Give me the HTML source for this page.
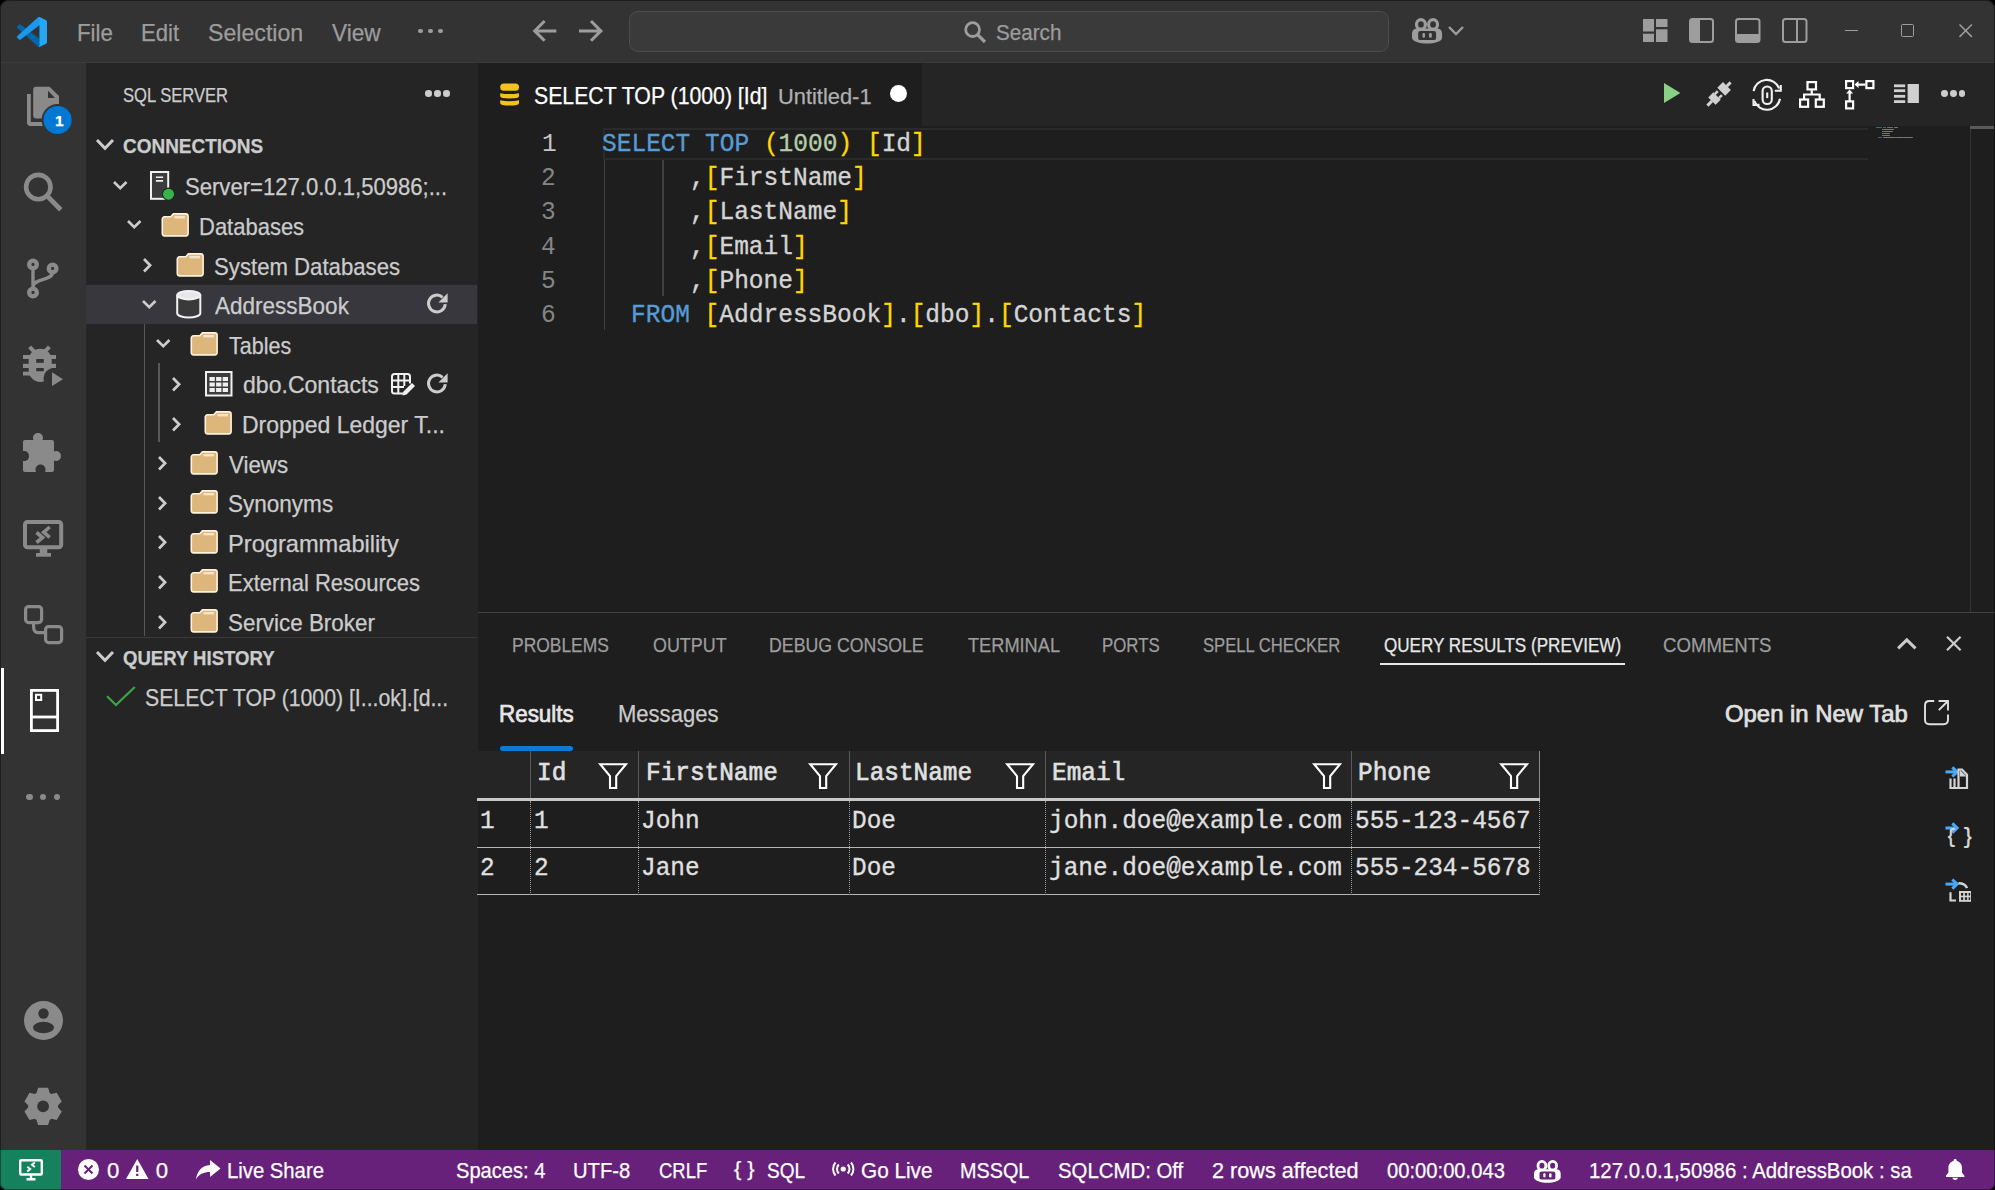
<!DOCTYPE html>
<html><head><meta charset="utf-8">
<style>
*{box-sizing:border-box;margin:0;padding:0}
html,body{width:1995px;height:1190px;overflow:hidden;background:#000}
body{font-family:"Liberation Sans",sans-serif;color:#ccc}
.a:not(.mono){-webkit-text-stroke:0.25px currentColor}
.a{position:absolute;white-space:nowrap}
.mono{font-family:"Liberation Mono",monospace}
#win{position:absolute;left:0;top:0;width:1995px;height:1190px;border-radius:9px 9px 7px 7px;overflow:hidden;background:#1e1e1e}
#frame{position:absolute;left:0;top:0;width:1995px;height:1190px;border-radius:9px 9px 7px 7px;box-shadow:inset 0 0 0 1px rgba(0,0,0,.4);pointer-events:none}
svg{position:absolute;overflow:visible}
</style></head><body>
<div id="win">
<div class="a" style="left:0px;top:0px;width:1995px;height:63px;background:#333333;"></div>
<div class="a" style="left:0px;top:63px;width:86px;height:1087px;background:#333333;"></div>
<div class="a" style="left:86px;top:63px;width:392px;height:1087px;background:#252526;"></div>
<div class="a" style="left:478px;top:63px;width:1517px;height:63px;background:#252526;"></div>
<div class="a" style="left:478px;top:126px;width:1517px;height:486px;background:#1e1e1e;"></div>
<div class="a" style="left:478px;top:612px;width:1517px;height:538px;background:#1e1e1e;"></div>
<div class="a" style="left:478px;top:612px;width:1517px;height:1.2px;background:#424242;"></div>
<div class="a" style="left:0px;top:1150px;width:1995px;height:40px;background:#68217a;"></div>
<div class="a" style="left:0px;top:61.8px;width:1995px;height:1.2px;background:#3b3b3b;"></div>
<div class="a" style="left:0px;top:1150px;width:61px;height:40px;background:#16825d;"></div>
<svg style="left:17px;top:17px;" width="30" height="30" viewBox="0 0 100 100"><path fill="#0065a9" d="M96.5 10.8 75.9 0.9a6.2 6.2 0 0 0-7.1 1.2L29.4 38 12.2 25a4.2 4.2 0 0 0-5.3.2L1.4 30.3a4.2 4.2 0 0 0 0 6.2L16.3 50 1.4 63.5a4.2 4.2 0 0 0 0 6.2l5.5 5a4.2 4.2 0 0 0 5.3.2L29.4 62l39.4 35.9a6.2 6.2 0 0 0 7.1 1.2l20.6-9.9a6.2 6.2 0 0 0 3.5-5.6V16.4a6.2 6.2 0 0 0-3.5-5.6zM75 72.7 45.1 50 75 27.3z"/><path fill="#1f9cf0" d="M96.5 10.8 75.9 0.9a6.2 6.2 0 0 0-7.1 1.2L1.4 63.5a4.2 4.2 0 0 0 0 6.2l5.5 5a4.2 4.2 0 0 0 5.3.2L93 13.6a4.2 4.2 0 0 1 7 3.1v-.3a6.2 6.2 0 0 0-3.5-5.6z" opacity=".9"/><path fill="#24a8f5" d="M75.9 99.1a6.2 6.2 0 0 1-7.1-1.2 3.6 3.6 0 0 0 6.2-2.6V4.7a3.6 3.6 0 0 0-6.2-2.6 6.2 6.2 0 0 1 7.1-1.2l20.6 9.9a6.2 6.2 0 0 1 3.5 5.6v67.2a6.2 6.2 0 0 1-3.5 5.6z"/></svg>
<div class="a" style="left:77.24px;top:22px;font-size:23.2px;line-height:23.2px;color:#9d9d9d;transform:scaleX(0.9615);transform-origin:0 0;">File</div>
<div class="a" style="left:141.45px;top:22px;font-size:23.2px;line-height:23.2px;color:#9d9d9d;transform:scaleX(0.9541);transform-origin:0 0;">Edit</div>
<div class="a" style="left:208.20px;top:22px;font-size:23.2px;line-height:23.2px;color:#9d9d9d;transform:scaleX(0.9979);transform-origin:0 0;">Selection</div>
<div class="a" style="left:332.00px;top:22px;font-size:23.2px;line-height:23.2px;color:#9d9d9d;transform:scaleX(0.9742);transform-origin:0 0;">View</div>
<div class="a" style="left:418.2px;top:28.5px;width:4.6px;height:4.6px;border-radius:50%;background:#9d9d9d"></div>
<div class="a" style="left:428.09999999999997px;top:28.5px;width:4.6px;height:4.6px;border-radius:50%;background:#9d9d9d"></div>
<div class="a" style="left:438.0px;top:28.5px;width:4.6px;height:4.6px;border-radius:50%;background:#9d9d9d"></div>
<svg style="left:532.6px;top:19.9px;" width="23.4" height="21.8" viewBox="0 0 23.4 21.8"><path d="M23.4 10.9H2.5M11.6 1 1.7 10.9l9.9 9.9" fill="none" stroke="#9d9d9d" stroke-width="3"/></svg>
<svg style="left:579px;top:19.9px;" width="24" height="21.8" viewBox="0 0 24 21.8"><path d="M0 10.9h21.3M12 1l9.9 9.9L12 20.8" fill="none" stroke="#9d9d9d" stroke-width="3"/></svg>
<div class="a" style="left:629px;top:11px;width:760px;height:40.5px;border-radius:9px;background:#3a3a3a;border:1.5px solid #4d4d4d"></div>
<svg style="left:964px;top:21px;" width="22" height="22" viewBox="0 0 22 22"><circle cx="8.6" cy="8.6" r="6.9" fill="none" stroke="#9d9d9d" stroke-width="2.8"/><path d="M13.6 13.6 21 21" stroke="#9d9d9d" stroke-width="3.2"/></svg>
<div class="a" style="left:996.06px;top:22px;font-size:22px;line-height:22px;color:#9d9d9d;transform:scaleX(0.9382);transform-origin:0 0;">Search</div>
<svg style="left:1411.8px;top:17.6px;" width="30.1" height="25.6" viewBox="0 0 30.1 25.6"><path fill="#9d9d9d" d="M0 16.4C0 11.4 2.2 10.4 6.2 10.4H23.9C27.9 10.4 30.1 11.4 30.1 16.4V19.4C30.1 23.4 22.2 25.6 15.05 25.6S0 23.4 0 19.4z"/><rect x="6.2" y="13" width="17.9" height="9.1" rx="2.2" fill="#333333"/><rect x="10.5" y="14.9" width="2.5" height="4.9" rx="1.25" fill="#9d9d9d"/><rect x="17" y="14.9" width="2.8" height="4.9" rx="1.3" fill="#9d9d9d"/><ellipse cx="8.95" cy="6.4" rx="4.45" ry="4.8" fill="#333333" stroke="#9d9d9d" stroke-width="3.2"/><ellipse cx="21.05" cy="6.4" rx="4.45" ry="4.8" fill="#333333" stroke="#9d9d9d" stroke-width="3.2"/></svg>
<svg style="left:1448px;top:26px;" width="16" height="9" viewBox="0 0 16 9"><path d="M1 1l7 7 7-7" fill="none" stroke="#9d9d9d" stroke-width="2.4"/></svg>
<svg style="left:1642.6px;top:19px;" width="24.5" height="23" viewBox="0 0 24.5 23"><g fill="#9d9d9d"><rect x="0" y="0" width="11" height="12.5"/><rect x="0" y="14.7" width="11" height="8.3"/><rect x="13" y="0" width="11.5" height="8"/><rect x="13" y="10.3" width="11.5" height="12.7"/></g></svg>
<svg style="left:1689px;top:18px;" width="25" height="25" viewBox="0 0 25 25"><rect x="1" y="1" width="23" height="23" rx="2.5" fill="none" stroke="#9d9d9d" stroke-width="2"/><path d="M1 3.5C1 2 2 1 3.5 1H11v23H3.5C2 24 1 23 1 21.5z" fill="#9d9d9d"/></svg>
<svg style="left:1735.3px;top:18px;" width="25.5" height="25" viewBox="0 0 25.5 25"><rect x="1" y="1" width="23.5" height="23" rx="2.5" fill="none" stroke="#9d9d9d" stroke-width="2"/><path d="M1 15.9h23.5v5.6c0 1.5-1 2.5-2.5 2.5H3.5C2 24 1 23 1 21.5z" fill="#9d9d9d"/></svg>
<svg style="left:1782.2px;top:18px;" width="25.5" height="25" viewBox="0 0 25.5 25"><rect x="1" y="1" width="23.5" height="23" rx="2.5" fill="none" stroke="#9d9d9d" stroke-width="2"/><path d="M15 1v23" stroke="#9d9d9d" stroke-width="2"/></svg>
<div class="a" style="left:1845px;top:29.6px;width:13px;height:1.4px;background:#9d9d9d;"></div>
<div class="a" style="left:1901px;top:24px;width:13px;height:13px;border:1.4px solid #9d9d9d;border-radius:1.5px"></div>
<svg style="left:1958.6px;top:24px;" width="13.4" height="13.4" viewBox="0 0 13.4 13.4"><path d="M.5.5l12.4 12.4M12.9.5.5 12.9" stroke="#9d9d9d" stroke-width="1.5"/></svg>
<svg style="left:20px;top:80px;" width="56" height="56" viewBox="0 0 56 56"><path fill="#8a8a8a" d="M16.2 6.8H29.6L39 16V35.6Q39 38.6 36 38.6H16.2Q13.2 38.6 13.2 35.6V9.8Q13.2 6.8 16.2 6.8z"/><path fill="#333" d="M28 10.8V18.1H35z"/><path fill="none" stroke="#8a8a8a" stroke-width="3.8" d="M8.9 13.9V42.5Q8.9 44 10.4 44H26"/><circle cx="37.6" cy="40" r="16" fill="#333"/><circle cx="37.6" cy="40" r="14.1" fill="#0078d4"/></svg>
<div class="a" style="left:55.00px;top:113px;font-size:15.5px;line-height:15.5px;color:#ffffff;font-weight:700;">1</div>
<svg style="left:0px;top:0px;" width="1" height="1" viewBox="0 0 1 1"><circle cx="38.3" cy="187.1" r="12.2" fill="none" stroke="#8a8a8a" stroke-width="4.6"/><path d="M47.3 196.1 60.8 209.8" stroke="#8a8a8a" stroke-width="4.8"/></svg>
<svg style="left:0px;top:0px;" width="1" height="1" viewBox="0 0 1 1"><g fill="none" stroke="#8a8a8a"><path d="M33 268.2V288.6M52.6 272.2c0 8.5-19.6 6.5-19.6 14.5" stroke-width="3.4"/><circle cx="33" cy="264.4" r="3.8" stroke-width="4.4"/><circle cx="33" cy="292.4" r="3.8" stroke-width="4.4"/><circle cx="52.6" cy="268.4" r="3.8" stroke-width="4.4"/></g></svg>
<svg style="left:21px;top:344px;" width="44" height="44" viewBox="0 0 44 44"><g fill="#8a8a8a"><rect x="2" y="11" width="33" height="4"/><rect x="2" y="19.8" width="33" height="4.2"/><rect x="2" y="27.7" width="33" height="3.8"/><rect x="7.7" y="4.7" width="23" height="33.2" rx="11.5"/></g><path d="M8.6 2.8 13.5 7.8M28.4 2.8 23.5 7.8" stroke="#8a8a8a" stroke-width="4"/><g fill="#333"><rect x="15.2" y="15" width="7.6" height="3.8"/><rect x="15.2" y="24" width="7.6" height="3.2"/><circle cx="33" cy="34.5" r="10.5"/></g><path d="M31 28.2 42 35.2 31 42.1z" fill="#8a8a8a"/></svg>
<svg style="left:22.5px;top:432.5px;" width="40" height="39" viewBox="0 0 40 39"><path fill="#8a8a8a" d="M15 0c3 0 5 2.2 5 5 0 .8-.2 1.5-.5 2H29c1.1 0 2 .9 2 2v9.5c.5-.3 1.2-.5 2-.5 3 0 5 2.2 5 5s-2 5-5 5c-.8 0-1.5-.2-2-.5V37c0 1.1-.9 2-2 2h-7c.3-.7.5-1.5.5-2.3 0-3-2.2-5.2-5-5.2s-5 2.2-5 5.2c0 .8.2 1.6.5 2.3H2c-1.1 0-2-.9-2-2V28h1c3 0 5-2 5-5s-2-5-5-5H0V9c0-1.1.9-2 2-2h8.5c-.3-.5-.5-1.2-.5-2 0-2.8 2-5 5-5z"/></svg>
<svg style="left:21px;top:518px;" width="44" height="40" viewBox="0 0 44 40"><rect x="4" y="3.9" width="36.2" height="25.3" rx="2.5" fill="none" stroke="#8a8a8a" stroke-width="4"/><rect x="18.8" y="30" width="7.5" height="5" fill="#8a8a8a"/><rect x="15" y="35" width="15" height="3.7" fill="#8a8a8a"/><path d="M15.5 14.5 21.5 19.5 15.5 24.5M28.7 9 22.7 14.2 28.7 19.4" fill="none" stroke="#8a8a8a" stroke-width="3.6"/></svg>
<svg style="left:24px;top:604.5px;" width="40" height="40" viewBox="0 0 40 40"><g fill="none" stroke="#8a8a8a" stroke-width="3.2"><rect x="1.6" y="1.6" width="16" height="16" rx="3"/><rect x="21.6" y="21.6" width="16" height="16" rx="3"/><path d="M9.6 17.6v4.5c0 3 1.5 5.5 4.5 5.5h7.5"/></g></svg>
<div class="a" style="left:1px;top:668px;width:2.6px;height:86px;background:#ffffff;"></div>
<svg style="left:29.5px;top:688.8px;" width="29" height="43" viewBox="0 0 29 43"><g fill="none" stroke="#ffffff" stroke-width="2.8"><rect x="1.4" y="1.4" width="26.2" height="40.2"/><path d="M1.4 28h26.2"/><rect x="6" y="5.8" width="5.2" height="5.2" stroke-width="2"/></g></svg>
<div class="a" style="left:26.4px;top:794.3px;width:6.2px;height:6.2px;border-radius:50%;background:#8a8a8a"></div>
<div class="a" style="left:39.9px;top:794.3px;width:6.2px;height:6.2px;border-radius:50%;background:#8a8a8a"></div>
<div class="a" style="left:53.5px;top:794.3px;width:6.2px;height:6.2px;border-radius:50%;background:#8a8a8a"></div>
<svg style="left:23.8px;top:1000.8px;" width="39" height="39" viewBox="0 0 39 39"><circle cx="19.5" cy="19.5" r="19.5" fill="#8a8a8a"/><circle cx="19.5" cy="12.5" r="5.2" fill="#333"/><ellipse cx="19.5" cy="26.5" rx="10.5" ry="5.8" fill="#333"/></svg>
<svg style="left:23.8px;top:1086.8px;" width="39" height="39" viewBox="0 0 39 39"><polygon points="10.71,6.96 12.52,5.92 14.10,0.76 24.10,0.76 25.68,5.92 25.68,5.92 27.49,6.96 32.75,5.75 37.74,14.40 34.06,18.35 34.06,18.35 34.06,20.45 37.74,24.40 32.75,33.05 27.49,31.84 27.49,31.84 25.68,32.88 24.10,38.04 14.10,38.04 12.52,32.88 12.52,32.88 10.71,31.84 5.45,33.05 0.46,24.40 4.14,20.45 4.14,20.45 4.14,18.35 0.46,14.40 5.45,5.75 10.71,6.96" fill="#8a8a8a"/><circle cx="19.1" cy="19.4" r="5.9" fill="#333"/></svg>
<div class="a" style="left:123.10px;top:86px;font-size:19.6px;line-height:19.6px;color:#cccccc;transform:scaleX(0.8459);transform-origin:0 0;">SQL SERVER</div>
<div class="a" style="left:425.2px;top:90.3px;width:6.6px;height:6.6px;border-radius:50%;background:#cccccc"></div>
<div class="a" style="left:434.2px;top:90.3px;width:6.6px;height:6.6px;border-radius:50%;background:#cccccc"></div>
<div class="a" style="left:443.2px;top:90.3px;width:6.6px;height:6.6px;border-radius:50%;background:#cccccc"></div>
<svg style="left:95.5px;top:139.45px;" width="18" height="10.5" viewBox="0 0 18 10.5"><path d="M1 1 9.0 9.3 17 1" fill="none" stroke="#cccccc" stroke-width="3"/></svg>
<div class="a" style="left:123.10px;top:137px;font-size:19.6px;line-height:19.6px;color:#cccccc;font-weight:700;transform:scaleX(0.9681);transform-origin:0 0;">CONNECTIONS</div>
<div class="a" style="left:86px;top:284.8px;width:391px;height:39.2px;background:#37373d;"></div>
<div class="a" style="left:144.2px;top:323.50000000000006px;width:1.2px;height:312.49999999999994px;background:#585858;"></div>
<div class="a" style="left:158.4px;top:363.1px;width:1.2px;height:79.19999999999999px;background:#585858;"></div>
<svg style="left:113.05px;top:180.75px;" width="14.5" height="8.3" viewBox="0 0 14.5 8.3"><path d="M1 1 7.25 7.1000000000000005 13.5 1" fill="none" stroke="#cccccc" stroke-width="2.7"/></svg>
<div class="a" style="left:184.75px;top:176px;font-size:23.2px;line-height:23.2px;color:#cccccc;transform:scaleX(0.9524);transform-origin:0 0;">Server=127.0.0.1,50986;...</div>
<svg style="left:150.1px;top:171.1px;" width="25" height="29.5" viewBox="0 0 25 29.5"><rect x="1" y="1" width="17.2" height="26.8" fill="#3c3c3c" stroke="#f2f2f2" stroke-width="2"/><path d="M5.9 6.2h7.2M5.9 9.9h7.2" stroke="#f2f2f2" stroke-width="1.6"/><circle cx="18.5" cy="23.2" r="6.6" fill="#252526"/><circle cx="18.5" cy="23.2" r="5.5" fill="#37b34a"/></svg>
<svg style="left:127.44999999999999px;top:220.35px;" width="14.5" height="8.3" viewBox="0 0 14.5 8.3"><path d="M1 1 7.25 7.1000000000000005 13.5 1" fill="none" stroke="#cccccc" stroke-width="2.7"/></svg>
<div class="a" style="left:199.15px;top:216px;font-size:23.2px;line-height:23.2px;color:#cccccc;transform:scaleX(0.9482);transform-origin:0 0;">Databases</div>
<svg style="left:162.2px;top:212.9px;" width="27" height="23.5" viewBox="0 0 27 23.5"><path d="M2.6 3.8h6.2l2.6-2.9h12.4c1.3 0 2.3 1 2.3 2.3v17.4c0 1.3-1 2.3-2.3 2.3H2.6c-1.3 0-2.3-1-2.3-2.3V6.1c0-1.3 1-2.3 2.3-2.3z" fill="#dcb67a" stroke="#fff3dd" stroke-width="1.6"/><path d="M12.4 3h10.6v2.4H12.4z" fill="#f6e3c9"/></svg>
<svg style="left:143.15px;top:258.25px;" width="8.3" height="14.5" viewBox="0 0 8.3 14.5"><path d="M1 1 7.1000000000000005 7.25 1 13.5" fill="none" stroke="#cccccc" stroke-width="2.7"/></svg>
<div class="a" style="left:213.54px;top:256px;font-size:23.2px;line-height:23.2px;color:#cccccc;transform:scaleX(0.9564);transform-origin:0 0;">System Databases</div>
<svg style="left:176.6px;top:252.5px;" width="27" height="23.5" viewBox="0 0 27 23.5"><path d="M2.6 3.8h6.2l2.6-2.9h12.4c1.3 0 2.3 1 2.3 2.3v17.4c0 1.3-1 2.3-2.3 2.3H2.6c-1.3 0-2.3-1-2.3-2.3V6.1c0-1.3 1-2.3 2.3-2.3z" fill="#dcb67a" stroke="#fff3dd" stroke-width="1.6"/><path d="M12.4 3h10.6v2.4H12.4z" fill="#f6e3c9"/></svg>
<svg style="left:141.85px;top:299.55000000000007px;" width="14.5" height="8.3" viewBox="0 0 14.5 8.3"><path d="M1 1 7.25 7.1000000000000005 13.5 1" fill="none" stroke="#cccccc" stroke-width="2.7"/></svg>
<div class="a" style="left:214.50px;top:295px;font-size:23.2px;line-height:23.2px;color:#cccccc;transform:scaleX(0.9709);transform-origin:0 0;">AddressBook</div>
<svg style="left:175.9px;top:290.4px;" width="25.5" height="28.5" viewBox="0 0 25.5 28.5"><path d="M1.2 5.2v18c0 2.4 5.2 4.3 11.55 4.3s11.55-1.9 11.55-4.3v-18" fill="#3a3a3a" stroke="#f2f2f2" stroke-width="2"/><ellipse cx="12.75" cy="5.2" rx="11.55" ry="4.2" fill="#e8e8e8" stroke="#f2f2f2" stroke-width="2"/></svg>
<svg style="left:156.25px;top:339.1500000000001px;" width="14.5" height="8.3" viewBox="0 0 14.5 8.3"><path d="M1 1 7.25 7.1000000000000005 13.5 1" fill="none" stroke="#cccccc" stroke-width="2.7"/></svg>
<div class="a" style="left:228.90px;top:335px;font-size:23.2px;line-height:23.2px;color:#cccccc;transform:scaleX(0.9273);transform-origin:0 0;">Tables</div>
<svg style="left:191.0px;top:331.70000000000005px;" width="27" height="23.5" viewBox="0 0 27 23.5"><path d="M2.6 3.8h6.2l2.6-2.9h12.4c1.3 0 2.3 1 2.3 2.3v17.4c0 1.3-1 2.3-2.3 2.3H2.6c-1.3 0-2.3-1-2.3-2.3V6.1c0-1.3 1-2.3 2.3-2.3z" fill="#dcb67a" stroke="#fff3dd" stroke-width="1.6"/><path d="M12.4 3h10.6v2.4H12.4z" fill="#f6e3c9"/></svg>
<svg style="left:171.95000000000002px;top:377.05px;" width="8.3" height="14.5" viewBox="0 0 8.3 14.5"><path d="M1 1 7.1000000000000005 7.25 1 13.5" fill="none" stroke="#cccccc" stroke-width="2.7"/></svg>
<div class="a" style="left:243.30px;top:374px;font-size:23.2px;line-height:23.2px;color:#cccccc;transform:scaleX(0.9946);transform-origin:0 0;">dbo.Contacts</div>
<svg style="left:204.9px;top:370.8px;" width="27.5" height="25.5" viewBox="0 0 27.5 25.5"><rect x="1" y="1" width="25.5" height="23.5" fill="#3c3c3c" stroke="#f0f0f0" stroke-width="2"/><g fill="#f0f0f0"><rect x="4.5" y="6" width="5.3" height="4"/><rect x="11.1" y="6" width="5.3" height="4"/><rect x="17.7" y="6" width="5.3" height="4"/><rect x="4.5" y="11.5" width="5.3" height="4"/><rect x="11.1" y="11.5" width="5.3" height="4"/><rect x="17.7" y="11.5" width="5.3" height="4"/><rect x="4.5" y="17" width="5.3" height="4"/><rect x="11.1" y="17" width="5.3" height="4"/><rect x="17.7" y="17" width="5.3" height="4"/></g></svg>
<svg style="left:171.95000000000002px;top:416.65000000000003px;" width="8.3" height="14.5" viewBox="0 0 8.3 14.5"><path d="M1 1 7.1000000000000005 7.25 1 13.5" fill="none" stroke="#cccccc" stroke-width="2.7"/></svg>
<div class="a" style="left:242.31px;top:414px;font-size:23.2px;line-height:23.2px;color:#cccccc;transform:scaleX(0.9921);transform-origin:0 0;">Dropped Ledger T...</div>
<svg style="left:205.39999999999998px;top:410.90000000000003px;" width="27" height="23.5" viewBox="0 0 27 23.5"><path d="M2.6 3.8h6.2l2.6-2.9h12.4c1.3 0 2.3 1 2.3 2.3v17.4c0 1.3-1 2.3-2.3 2.3H2.6c-1.3 0-2.3-1-2.3-2.3V6.1c0-1.3 1-2.3 2.3-2.3z" fill="#dcb67a" stroke="#fff3dd" stroke-width="1.6"/><path d="M12.4 3h10.6v2.4H12.4z" fill="#f6e3c9"/></svg>
<svg style="left:157.55px;top:456.25px;" width="8.3" height="14.5" viewBox="0 0 8.3 14.5"><path d="M1 1 7.1000000000000005 7.25 1 13.5" fill="none" stroke="#cccccc" stroke-width="2.7"/></svg>
<div class="a" style="left:228.90px;top:454px;font-size:23.2px;line-height:23.2px;color:#cccccc;transform:scaleX(0.9615);transform-origin:0 0;">Views</div>
<svg style="left:191.0px;top:450.5px;" width="27" height="23.5" viewBox="0 0 27 23.5"><path d="M2.6 3.8h6.2l2.6-2.9h12.4c1.3 0 2.3 1 2.3 2.3v17.4c0 1.3-1 2.3-2.3 2.3H2.6c-1.3 0-2.3-1-2.3-2.3V6.1c0-1.3 1-2.3 2.3-2.3z" fill="#dcb67a" stroke="#fff3dd" stroke-width="1.6"/><path d="M12.4 3h10.6v2.4H12.4z" fill="#f6e3c9"/></svg>
<svg style="left:157.55px;top:495.85px;" width="8.3" height="14.5" viewBox="0 0 8.3 14.5"><path d="M1 1 7.1000000000000005 7.25 1 13.5" fill="none" stroke="#cccccc" stroke-width="2.7"/></svg>
<div class="a" style="left:227.93px;top:493px;font-size:23.2px;line-height:23.2px;color:#cccccc;transform:scaleX(0.9713);transform-origin:0 0;">Synonyms</div>
<svg style="left:191.0px;top:490.1px;" width="27" height="23.5" viewBox="0 0 27 23.5"><path d="M2.6 3.8h6.2l2.6-2.9h12.4c1.3 0 2.3 1 2.3 2.3v17.4c0 1.3-1 2.3-2.3 2.3H2.6c-1.3 0-2.3-1-2.3-2.3V6.1c0-1.3 1-2.3 2.3-2.3z" fill="#dcb67a" stroke="#fff3dd" stroke-width="1.6"/><path d="M12.4 3h10.6v2.4H12.4z" fill="#f6e3c9"/></svg>
<svg style="left:157.55px;top:535.45px;" width="8.3" height="14.5" viewBox="0 0 8.3 14.5"><path d="M1 1 7.1000000000000005 7.25 1 13.5" fill="none" stroke="#cccccc" stroke-width="2.7"/></svg>
<div class="a" style="left:227.88px;top:533px;font-size:23.2px;line-height:23.2px;color:#cccccc;transform:scaleX(1.0191);transform-origin:0 0;">Programmability</div>
<svg style="left:191.0px;top:529.7px;" width="27" height="23.5" viewBox="0 0 27 23.5"><path d="M2.6 3.8h6.2l2.6-2.9h12.4c1.3 0 2.3 1 2.3 2.3v17.4c0 1.3-1 2.3-2.3 2.3H2.6c-1.3 0-2.3-1-2.3-2.3V6.1c0-1.3 1-2.3 2.3-2.3z" fill="#dcb67a" stroke="#fff3dd" stroke-width="1.6"/><path d="M12.4 3h10.6v2.4H12.4z" fill="#f6e3c9"/></svg>
<svg style="left:157.55px;top:575.05px;" width="8.3" height="14.5" viewBox="0 0 8.3 14.5"><path d="M1 1 7.1000000000000005 7.25 1 13.5" fill="none" stroke="#cccccc" stroke-width="2.7"/></svg>
<div class="a" style="left:227.95px;top:572px;font-size:23.2px;line-height:23.2px;color:#cccccc;transform:scaleX(0.9495);transform-origin:0 0;">External Resources</div>
<svg style="left:191.0px;top:569.3px;" width="27" height="23.5" viewBox="0 0 27 23.5"><path d="M2.6 3.8h6.2l2.6-2.9h12.4c1.3 0 2.3 1 2.3 2.3v17.4c0 1.3-1 2.3-2.3 2.3H2.6c-1.3 0-2.3-1-2.3-2.3V6.1c0-1.3 1-2.3 2.3-2.3z" fill="#dcb67a" stroke="#fff3dd" stroke-width="1.6"/><path d="M12.4 3h10.6v2.4H12.4z" fill="#f6e3c9"/></svg>
<svg style="left:157.55px;top:614.6500000000001px;" width="8.3" height="14.5" viewBox="0 0 8.3 14.5"><path d="M1 1 7.1000000000000005 7.25 1 13.5" fill="none" stroke="#cccccc" stroke-width="2.7"/></svg>
<div class="a" style="left:227.93px;top:612px;font-size:23.2px;line-height:23.2px;color:#cccccc;transform:scaleX(0.9661);transform-origin:0 0;">Service Broker</div>
<svg style="left:191.0px;top:608.9000000000001px;" width="27" height="23.5" viewBox="0 0 27 23.5"><path d="M2.6 3.8h6.2l2.6-2.9h12.4c1.3 0 2.3 1 2.3 2.3v17.4c0 1.3-1 2.3-2.3 2.3H2.6c-1.3 0-2.3-1-2.3-2.3V6.1c0-1.3 1-2.3 2.3-2.3z" fill="#dcb67a" stroke="#fff3dd" stroke-width="1.6"/><path d="M12.4 3h10.6v2.4H12.4z" fill="#f6e3c9"/></svg>
<svg style="left:425.7px;top:292.2px;" width="23" height="22.5" viewBox="0 0 23 22.5"><path d="M19.3 12.2A8.4 8.4 0 1 1 16.6 5.3" fill="none" stroke="#cccccc" stroke-width="3"/><path d="M21.6 1.2v9.2h-9.2z" fill="#cccccc"/></svg>
<svg style="left:425.7px;top:372.4px;" width="23" height="22.5" viewBox="0 0 23 22.5"><path d="M19.3 12.2A8.4 8.4 0 1 1 16.6 5.3" fill="none" stroke="#cccccc" stroke-width="3"/><path d="M21.6 1.2v9.2h-9.2z" fill="#cccccc"/></svg>
<svg style="left:390.8px;top:372.5px;" width="24.5" height="24" viewBox="0 0 24.5 24"><g fill="none" stroke="#f0f0f0" stroke-width="2"><path d="M14 20.5H3.5c-1.4 0-2.5-1.1-2.5-2.5V3.5C1 2.1 2.1 1 3.5 1h13c1.4 0 2.5 1.1 2.5 2.5v7"/><path d="M1 7.5h18M1 14h12M7.3 1v19.5M13.3 1v12"/></g><path d="M11.5 22.5l1-4 8.5-8.5 3 3-8.5 8.5z" fill="#f0f0f0"/></svg>
<div class="a" style="left:86px;top:636.6px;width:391px;height:1.3px;background:#3a3a3a;"></div>
<svg style="left:95.7px;top:651.25px;" width="18" height="10.5" viewBox="0 0 18 10.5"><path d="M1 1 9.0 9.3 17 1" fill="none" stroke="#cccccc" stroke-width="3"/></svg>
<div class="a" style="left:123.00px;top:649px;font-size:19.6px;line-height:19.6px;color:#cccccc;font-weight:700;transform:scaleX(0.9468);transform-origin:0 0;">QUERY HISTORY</div>
<svg style="left:106px;top:686px;" width="30" height="21" viewBox="0 0 30 21"><path d="M1 10.2 10 19 28.8 1" fill="none" stroke="#3da344" stroke-width="2.3"/></svg>
<div class="a" style="left:144.78px;top:687px;font-size:23.2px;line-height:23.2px;color:#cccccc;transform:scaleX(0.9165);transform-origin:0 0;">SELECT TOP (1000) [I...ok].[d...</div>
<div class="a" style="left:478px;top:63px;width:444px;height:63px;background:#1e1e1e;"></div>
<svg style="left:0px;top:0px;" width="1" height="1" viewBox="0 0 1 1"><g fill="#f4c21c"><rect x="500.2" y="83.4" width="18.8" height="7.4" rx="3.6"/><path d="M500.2 93.2Q509.6 95 519 93.2V96.2Q519 98.4 509.6 98.4T500.2 96.2z"/><path d="M500.2 100.3Q509.6 102.1 519 100.3V103.2Q519 105.5 509.6 105.5T500.2 103.2z"/></g></svg>
<div class="a" style="left:533.78px;top:85px;font-size:23.2px;line-height:23.2px;color:#ffffff;transform:scaleX(0.9161);transform-origin:0 0;">SELECT TOP (1000) [Id]</div>
<div class="a" style="left:777.99px;top:86px;font-size:21.6px;line-height:21.6px;color:#b0b0b0;transform:scaleX(1.0121);transform-origin:0 0;">Untitled-1</div>
<div class="a" style="left:889.8px;top:85.1px;width:17px;height:17px;border-radius:50%;background:#ffffff"></div>
<svg style="left:1664.2px;top:83.2px;" width="16.4" height="20.1" viewBox="0 0 16.4 20.1"><path d="M0 0l16.4 10.05L0 20.1z" fill="#89d185"/></svg>
<svg style="left:1719px;top:93.5px;" width="1" height="1" viewBox="0 0 1 1"><g transform="rotate(-45)" fill="#d0d0d0"><rect x="-16.4" y="-1.5" width="6.6" height="3"/><rect x="-10" y="-5.2" width="7.2" height="10.4"/><rect x="-3" y="-4.2" width="4.2" height="2.6"/><rect x="-3" y="1.6" width="4.2" height="2.6"/><rect x="3.2" y="-5.6" width="8" height="11.2"/><rect x="11" y="-1.5" width="5.4" height="3"/></g></svg>
<svg style="left:1751.5px;top:79.5px;" width="29.5" height="29.5" viewBox="0 0 29.5 29.5"><g fill="none" stroke="#f0f0f0" stroke-width="2.1"><path d="M1.6 11.2A13.3 13.3 0 0 1 27.2 8.5"/><path d="M22.8 10.8H28.8V4.9"/><path d="M28 18.8A13.3 13.3 0 0 1 2.4 21"/><path d="M7.5 24.9H1.5V18.9"/><rect x="10.6" y="6.5" width="9.2" height="17.5" rx="4.6"/><path d="M15.2 12.5v5.6"/></g></svg>
<svg style="left:1799.2px;top:80.8px;" width="26" height="27" viewBox="0 0 26 27"><g fill="none" stroke="#ffffff" stroke-width="2.2"><rect x="8.5" y="1.1" width="8.5" height="7.3"/><rect x="1.1" y="18.5" width="8" height="7.3"/><rect x="16.8" y="18.5" width="8" height="7.3"/><path d="M12.75 8.4v5.1M5.1 18.5v-5h15.6v5"/></g></svg>
<svg style="left:1844.9px;top:79.5px;" width="29.5" height="29.5" viewBox="0 0 29.5 29.5"><g fill="none" stroke="#ffffff" stroke-width="2.2"><rect x="1.1" y="1.1" width="7" height="7"/><rect x="21.4" y="1.1" width="7" height="7"/><rect x="1.1" y="21.4" width="7" height="7"/><path d="M4.6 21.4v-10M20.5 4.6H11.5"/></g><path d="M4.6 9.5l-3.5 4h7zM9.5 4.6l4-3.5v7z" fill="#ffffff"/></svg>
<svg style="left:1894px;top:83.9px;" width="25" height="19" viewBox="0 0 25 19"><g fill="#d0d0d0"><rect x="0" y="0.4" width="11.2" height="2.8"/><rect x="0" y="5.3" width="11.2" height="2.8"/><rect x="0" y="10.9" width="11.2" height="2.8"/><rect x="0" y="16.2" width="11.2" height="2.8"/><rect x="13.6" y="0" width="11.3" height="19"/></g></svg>
<div class="a" style="left:1941.3999999999999px;top:90.0px;width:6.8px;height:6.8px;border-radius:50%;background:#cccccc"></div>
<div class="a" style="left:1950.0px;top:90.0px;width:6.8px;height:6.8px;border-radius:50%;background:#cccccc"></div>
<div class="a" style="left:1958.6px;top:90.0px;width:6.8px;height:6.8px;border-radius:50%;background:#cccccc"></div>
<div class="a" style="left:603px;top:127.6px;width:1265px;height:32px;border:2px solid #2a2a2a;border-right:none"></div>
<div class="a" style="left:603.6px;top:159.6px;width:1.3px;height:170.79999999999998px;background:#404040;"></div>
<div class="a" style="left:662.3px;top:159.6px;width:1.3px;height:136.9px;background:#404040;"></div>
<div class="a mono" style="left:541.84px;top:132px;font-size:25.6px;line-height:25.6px;color:#c6c6c6;transform:scaleX(0.9582);transform-origin:0 0;">1</div>
<div class="a mono" style="left:540.54px;top:166px;font-size:25.6px;line-height:25.6px;color:#858585;transform:scaleX(0.9582);transform-origin:0 0;">2</div>
<div class="a mono" style="left:540.54px;top:200px;font-size:25.6px;line-height:25.6px;color:#858585;transform:scaleX(0.9582);transform-origin:0 0;">3</div>
<div class="a mono" style="left:540.54px;top:235px;font-size:25.6px;line-height:25.6px;color:#858585;transform:scaleX(0.9582);transform-origin:0 0;">4</div>
<div class="a mono" style="left:540.54px;top:269px;font-size:25.6px;line-height:25.6px;color:#858585;transform:scaleX(0.9582);transform-origin:0 0;">5</div>
<div class="a mono" style="left:540.54px;top:303px;font-size:25.6px;line-height:25.6px;color:#858585;transform:scaleX(0.9582);transform-origin:0 0;">6</div>
<div class="a mono" style="left:602.00px;top:132px;font-size:25.6px;line-height:25.6px;color:#d4d4d4;transform:scaleX(0.9582);transform-origin:0 0;-webkit-text-stroke:0.35px currentColor;"><span style="color:#569cd6">SELECT</span><span style="color:#d4d4d4"> </span><span style="color:#569cd6">TOP</span><span style="color:#d4d4d4"> </span><span style="color:#ffd700">(</span><span style="color:#b5cea8">1000</span><span style="color:#ffd700">)</span><span style="color:#d4d4d4"> </span><span style="color:#ffd700">[</span><span style="color:#d4d4d4">Id</span><span style="color:#ffd700">]</span></div>
<div class="a mono" style="left:690.32px;top:166px;font-size:25.6px;line-height:25.6px;color:#d4d4d4;transform:scaleX(0.9582);transform-origin:0 0;-webkit-text-stroke:0.35px currentColor;"><span style="color:#d4d4d4">,</span><span style="color:#ffd700">[</span><span style="color:#d4d4d4">FirstName</span><span style="color:#ffd700">]</span></div>
<div class="a mono" style="left:690.32px;top:200px;font-size:25.6px;line-height:25.6px;color:#d4d4d4;transform:scaleX(0.9582);transform-origin:0 0;-webkit-text-stroke:0.35px currentColor;"><span style="color:#d4d4d4">,</span><span style="color:#ffd700">[</span><span style="color:#d4d4d4">LastName</span><span style="color:#ffd700">]</span></div>
<div class="a mono" style="left:690.32px;top:235px;font-size:25.6px;line-height:25.6px;color:#d4d4d4;transform:scaleX(0.9582);transform-origin:0 0;-webkit-text-stroke:0.35px currentColor;"><span style="color:#d4d4d4">,</span><span style="color:#ffd700">[</span><span style="color:#d4d4d4">Email</span><span style="color:#ffd700">]</span></div>
<div class="a mono" style="left:690.32px;top:269px;font-size:25.6px;line-height:25.6px;color:#d4d4d4;transform:scaleX(0.9582);transform-origin:0 0;-webkit-text-stroke:0.35px currentColor;"><span style="color:#d4d4d4">,</span><span style="color:#ffd700">[</span><span style="color:#d4d4d4">Phone</span><span style="color:#ffd700">]</span></div>
<div class="a mono" style="left:631.44px;top:303px;font-size:25.6px;line-height:25.6px;color:#d4d4d4;transform:scaleX(0.9582);transform-origin:0 0;-webkit-text-stroke:0.35px currentColor;"><span style="color:#569cd6">FROM</span><span style="color:#d4d4d4"> </span><span style="color:#ffd700">[</span><span style="color:#d4d4d4">AddressBook</span><span style="color:#ffd700">]</span><span style="color:#d4d4d4">.</span><span style="color:#ffd700">[</span><span style="color:#d4d4d4">dbo</span><span style="color:#ffd700">]</span><span style="color:#d4d4d4">.</span><span style="color:#ffd700">[</span><span style="color:#d4d4d4">Contacts</span><span style="color:#ffd700">]</span></div>
<div class="a" style="left:1876px;top:126.6px;width:6px;height:1.1px;background:#4577a8;opacity:.8"></div>
<div class="a" style="left:1883px;top:126.6px;width:3px;height:1.1px;background:#4577a8;opacity:.8"></div>
<div class="a" style="left:1887px;top:126.6px;width:1px;height:1.1px;background:#8a7d48;opacity:.8"></div>
<div class="a" style="left:1888px;top:126.6px;width:4px;height:1.1px;background:#7f9070;opacity:.8"></div>
<div class="a" style="left:1892px;top:126.6px;width:1px;height:1.1px;background:#8a7d48;opacity:.8"></div>
<div class="a" style="left:1894px;top:126.6px;width:1px;height:1.1px;background:#8a7d48;opacity:.8"></div>
<div class="a" style="left:1895px;top:126.6px;width:2px;height:1.1px;background:#8e8e8e;opacity:.8"></div>
<div class="a" style="left:1897px;top:126.6px;width:1px;height:1.1px;background:#8a7d48;opacity:.8"></div>
<div class="a" style="left:1882px;top:128.7px;width:1px;height:1.1px;background:#8e8e8e;opacity:.8"></div>
<div class="a" style="left:1883px;top:128.7px;width:1px;height:1.1px;background:#8a7d48;opacity:.8"></div>
<div class="a" style="left:1884px;top:128.7px;width:9px;height:1.1px;background:#8e8e8e;opacity:.8"></div>
<div class="a" style="left:1893px;top:128.7px;width:1px;height:1.1px;background:#8a7d48;opacity:.8"></div>
<div class="a" style="left:1882px;top:130.8px;width:1px;height:1.1px;background:#8e8e8e;opacity:.8"></div>
<div class="a" style="left:1883px;top:130.8px;width:1px;height:1.1px;background:#8a7d48;opacity:.8"></div>
<div class="a" style="left:1884px;top:130.8px;width:8px;height:1.1px;background:#8e8e8e;opacity:.8"></div>
<div class="a" style="left:1892px;top:130.8px;width:1px;height:1.1px;background:#8a7d48;opacity:.8"></div>
<div class="a" style="left:1882px;top:132.9px;width:1px;height:1.1px;background:#8e8e8e;opacity:.8"></div>
<div class="a" style="left:1883px;top:132.9px;width:1px;height:1.1px;background:#8a7d48;opacity:.8"></div>
<div class="a" style="left:1884px;top:132.9px;width:5px;height:1.1px;background:#8e8e8e;opacity:.8"></div>
<div class="a" style="left:1889px;top:132.9px;width:1px;height:1.1px;background:#8a7d48;opacity:.8"></div>
<div class="a" style="left:1882px;top:135.0px;width:1px;height:1.1px;background:#8e8e8e;opacity:.8"></div>
<div class="a" style="left:1883px;top:135.0px;width:1px;height:1.1px;background:#8a7d48;opacity:.8"></div>
<div class="a" style="left:1884px;top:135.0px;width:5px;height:1.1px;background:#8e8e8e;opacity:.8"></div>
<div class="a" style="left:1889px;top:135.0px;width:1px;height:1.1px;background:#8a7d48;opacity:.8"></div>
<div class="a" style="left:1878px;top:137.1px;width:4px;height:1.1px;background:#4577a8;opacity:.8"></div>
<div class="a" style="left:1883px;top:137.1px;width:1px;height:1.1px;background:#8a7d48;opacity:.8"></div>
<div class="a" style="left:1884px;top:137.1px;width:11px;height:1.1px;background:#8e8e8e;opacity:.8"></div>
<div class="a" style="left:1895px;top:137.1px;width:1px;height:1.1px;background:#8a7d48;opacity:.8"></div>
<div class="a" style="left:1896px;top:137.1px;width:1px;height:1.1px;background:#8e8e8e;opacity:.8"></div>
<div class="a" style="left:1897px;top:137.1px;width:1px;height:1.1px;background:#8a7d48;opacity:.8"></div>
<div class="a" style="left:1898px;top:137.1px;width:3px;height:1.1px;background:#8e8e8e;opacity:.8"></div>
<div class="a" style="left:1901px;top:137.1px;width:1px;height:1.1px;background:#8a7d48;opacity:.8"></div>
<div class="a" style="left:1902px;top:137.1px;width:1px;height:1.1px;background:#8e8e8e;opacity:.8"></div>
<div class="a" style="left:1903px;top:137.1px;width:1px;height:1.1px;background:#8a7d48;opacity:.8"></div>
<div class="a" style="left:1904px;top:137.1px;width:8px;height:1.1px;background:#8e8e8e;opacity:.8"></div>
<div class="a" style="left:1912px;top:137.1px;width:1px;height:1.1px;background:#8a7d48;opacity:.8"></div>
<div class="a" style="left:1969.5px;top:127px;width:1.3px;height:485px;background:#333333;"></div>
<div class="a" style="left:1970px;top:126px;width:24px;height:3px;background:#5a5a5a;"></div>
<div class="a" style="left:512.45px;top:635px;font-size:20.4px;line-height:20.4px;color:#9d9d9d;transform:scaleX(0.8549);transform-origin:0 0;">PROBLEMS</div>
<div class="a" style="left:652.80px;top:635px;font-size:20.4px;line-height:20.4px;color:#9d9d9d;transform:scaleX(0.8780);transform-origin:0 0;">OUTPUT</div>
<div class="a" style="left:769.43px;top:635px;font-size:20.4px;line-height:20.4px;color:#9d9d9d;transform:scaleX(0.8696);transform-origin:0 0;">DEBUG CONSOLE</div>
<div class="a" style="left:967.70px;top:635px;font-size:20.4px;line-height:20.4px;color:#9d9d9d;transform:scaleX(0.8924);transform-origin:0 0;">TERMINAL</div>
<div class="a" style="left:1102.38px;top:635px;font-size:20.4px;line-height:20.4px;color:#9d9d9d;transform:scaleX(0.8246);transform-origin:0 0;">PORTS</div>
<div class="a" style="left:1203.30px;top:635px;font-size:20.4px;line-height:20.4px;color:#9d9d9d;transform:scaleX(0.8161);transform-origin:0 0;">SPELL CHECKER</div>
<div class="a" style="left:1383.60px;top:635px;font-size:20.4px;line-height:20.4px;color:#e7e7e7;transform:scaleX(0.8369);transform-origin:0 0;">QUERY RESULTS (PREVIEW)</div>
<div class="a" style="left:1663.49px;top:635px;font-size:20.4px;line-height:20.4px;color:#9d9d9d;transform:scaleX(0.9119);transform-origin:0 0;">COMMENTS</div>
<div class="a" style="left:1379.5px;top:663.2px;width:245.5px;height:1.4px;background:#e7e7e7;"></div>
<svg style="left:1896.5px;top:637.5px;" width="19.6" height="11.5" viewBox="0 0 19.6 11.5"><path d="M1.1 10.3 9.8 1.9 18.5 10.3" fill="none" stroke="#cccccc" stroke-width="3"/></svg>
<svg style="left:1945.5px;top:636px;" width="15.6" height="15" viewBox="0 0 15.6 15"><path d="M1 .7l13.6 13.6M14.6.7 1 14.3" stroke="#cccccc" stroke-width="2.2"/></svg>
<div class="a" style="left:498.53px;top:703px;font-size:23.2px;line-height:23.2px;color:#e8e8e8;transform:scaleX(0.9667);transform-origin:0 0;-webkit-text-stroke:0.7px #e8e8e8;">Results</div>
<div class="a" style="left:618.35px;top:703px;font-size:23.2px;line-height:23.2px;color:#cccccc;transform:scaleX(0.9502);transform-origin:0 0;">Messages</div>
<div class="a" style="left:499.5px;top:745.5px;width:73.2px;height:5.3px;border-radius:3px;background:#0e7ad3"></div>
<div class="a" style="left:1724.97px;top:703px;font-size:23.2px;line-height:23.2px;color:#e0e0e0;transform:scaleX(1.0297);transform-origin:0 0;-webkit-text-stroke:0.7px #e0e0e0;">Open in New Tab</div>
<svg style="left:1923.6px;top:700.2px;" width="25" height="25.2" viewBox="0 0 25 25.2"><g fill="none" stroke="#e0e0e0" stroke-width="1.9"><path d="M10.2 1H5.5Q1 1 1 5.5V19.7Q1 24.2 5.5 24.2H19.5Q24 24.2 24 19.7V14.6"/><path d="M14.6 1H24V10.6M24 1 14.8 10.2"/></g></svg>
<div class="a" style="left:477px;top:751px;width:1062.5px;height:47.5px;background:#252526;"></div>
<div class="a" style="left:477px;top:798px;width:1062.5px;height:3px;background:#c8c8c8;"></div>
<div class="a" style="left:477px;top:847.2px;width:1062.5px;height:1.1px;background:#b5b5b5;"></div>
<div class="a" style="left:477px;top:893.9px;width:1062.5px;height:1.1px;background:#b5b5b5;"></div>
<div class="a" style="left:529.6px;top:751px;width:1.2px;height:47px;background:#5a5a5a;"></div>
<div class="a" style="left:529.6px;top:801px;width:0;height:94px;border-left:1.2px dotted #9a9a9a"></div>
<div class="a" style="left:637.8px;top:751px;width:1.2px;height:47px;background:#5a5a5a;"></div>
<div class="a" style="left:637.8px;top:801px;width:0;height:94px;border-left:1.2px dotted #9a9a9a"></div>
<div class="a" style="left:848.6999999999999px;top:751px;width:1.2px;height:47px;background:#5a5a5a;"></div>
<div class="a" style="left:848.6999999999999px;top:801px;width:0;height:94px;border-left:1.2px dotted #9a9a9a"></div>
<div class="a" style="left:1044.9px;top:751px;width:1.2px;height:47px;background:#5a5a5a;"></div>
<div class="a" style="left:1044.9px;top:801px;width:0;height:94px;border-left:1.2px dotted #9a9a9a"></div>
<div class="a" style="left:1350.8000000000002px;top:751px;width:1.2px;height:47px;background:#5a5a5a;"></div>
<div class="a" style="left:1350.8000000000002px;top:801px;width:0;height:94px;border-left:1.2px dotted #9a9a9a"></div>
<div class="a" style="left:1538.9px;top:751px;width:1.2px;height:47px;background:#8a8a8a;"></div>
<div class="a" style="left:1538.9px;top:801px;width:0;height:94px;border-left:1.2px dotted #9a9a9a"></div>
<div class="a mono" style="left:537.35px;top:760px;font-size:26.4px;line-height:26.4px;color:#e0e0e0;transform:scaleX(0.9247);transform-origin:0 0;-webkit-text-stroke:0.65px #e0e0e0;">Id</div>
<svg style="left:598.5px;top:762.5px;" width="28.2" height="26" viewBox="0 0 28.2 26"><path d="M1.2 1.2h25.8L17.2 13.2v11.8h-6.2V13.2z" fill="none" stroke="#ffffff" stroke-width="2.1" stroke-linejoin="miter"/></svg>
<div class="a mono" style="left:645.55px;top:760px;font-size:26.4px;line-height:26.4px;color:#e0e0e0;transform:scaleX(0.9247);transform-origin:0 0;-webkit-text-stroke:0.65px #e0e0e0;">FirstName</div>
<svg style="left:809.1999999999999px;top:762.5px;" width="28.2" height="26" viewBox="0 0 28.2 26"><path d="M1.2 1.2h25.8L17.2 13.2v11.8h-6.2V13.2z" fill="none" stroke="#ffffff" stroke-width="2.1" stroke-linejoin="miter"/></svg>
<div class="a mono" style="left:854.53px;top:760px;font-size:26.4px;line-height:26.4px;color:#e0e0e0;transform:scaleX(0.9247);transform-origin:0 0;-webkit-text-stroke:0.65px #e0e0e0;">LastName</div>
<svg style="left:1005.8px;top:762.5px;" width="28.2" height="26" viewBox="0 0 28.2 26"><path d="M1.2 1.2h25.8L17.2 13.2v11.8h-6.2V13.2z" fill="none" stroke="#ffffff" stroke-width="2.1" stroke-linejoin="miter"/></svg>
<div class="a mono" style="left:1052.05px;top:760px;font-size:26.4px;line-height:26.4px;color:#e0e0e0;transform:scaleX(0.9247);transform-origin:0 0;-webkit-text-stroke:0.65px #e0e0e0;">Email</div>
<svg style="left:1312.8px;top:762.5px;" width="28.2" height="26" viewBox="0 0 28.2 26"><path d="M1.2 1.2h25.8L17.2 13.2v11.8h-6.2V13.2z" fill="none" stroke="#ffffff" stroke-width="2.1" stroke-linejoin="miter"/></svg>
<div class="a mono" style="left:1357.75px;top:760px;font-size:26.4px;line-height:26.4px;color:#e0e0e0;transform:scaleX(0.9247);transform-origin:0 0;-webkit-text-stroke:0.65px #e0e0e0;">Phone</div>
<svg style="left:1500.3999999999999px;top:762.5px;" width="28.2" height="26" viewBox="0 0 28.2 26"><path d="M1.2 1.2h25.8L17.2 13.2v11.8h-6.2V13.2z" fill="none" stroke="#ffffff" stroke-width="2.1" stroke-linejoin="miter"/></svg>
<div class="a mono" style="left:480.08px;top:808px;font-size:26.4px;line-height:26.4px;color:#e0e0e0;transform:scaleX(0.9247);transform-origin:0 0;-webkit-text-stroke:0.3px #e0e0e0;">1</div>
<div class="a mono" style="left:534.38px;top:808px;font-size:26.4px;line-height:26.4px;color:#e0e0e0;transform:scaleX(0.9247);transform-origin:0 0;-webkit-text-stroke:0.3px #e0e0e0;">1</div>
<div class="a mono" style="left:640.55px;top:808px;font-size:26.4px;line-height:26.4px;color:#e0e0e0;transform:scaleX(0.9247);transform-origin:0 0;-webkit-text-stroke:0.3px #e0e0e0;">John</div>
<div class="a mono" style="left:851.65px;top:808px;font-size:26.4px;line-height:26.4px;color:#e0e0e0;transform:scaleX(0.9247);transform-origin:0 0;-webkit-text-stroke:0.3px #e0e0e0;">Doe</div>
<div class="a mono" style="left:1049.08px;top:808px;font-size:26.4px;line-height:26.4px;color:#e0e0e0;transform:scaleX(0.9247);transform-origin:0 0;-webkit-text-stroke:0.3px #e0e0e0;">john.doe@example.com</div>
<div class="a mono" style="left:1355.08px;top:808px;font-size:26.4px;line-height:26.4px;color:#e0e0e0;transform:scaleX(0.9247);transform-origin:0 0;-webkit-text-stroke:0.3px #e0e0e0;">555-123-4567</div>
<div class="a mono" style="left:480.08px;top:855px;font-size:26.4px;line-height:26.4px;color:#e0e0e0;transform:scaleX(0.9247);transform-origin:0 0;-webkit-text-stroke:0.3px #e0e0e0;">2</div>
<div class="a mono" style="left:534.38px;top:855px;font-size:26.4px;line-height:26.4px;color:#e0e0e0;transform:scaleX(0.9247);transform-origin:0 0;-webkit-text-stroke:0.3px #e0e0e0;">2</div>
<div class="a mono" style="left:640.55px;top:855px;font-size:26.4px;line-height:26.4px;color:#e0e0e0;transform:scaleX(0.9247);transform-origin:0 0;-webkit-text-stroke:0.3px #e0e0e0;">Jane</div>
<div class="a mono" style="left:851.65px;top:855px;font-size:26.4px;line-height:26.4px;color:#e0e0e0;transform:scaleX(0.9247);transform-origin:0 0;-webkit-text-stroke:0.3px #e0e0e0;">Doe</div>
<div class="a mono" style="left:1049.08px;top:855px;font-size:26.4px;line-height:26.4px;color:#e0e0e0;transform:scaleX(0.9247);transform-origin:0 0;-webkit-text-stroke:0.3px #e0e0e0;">jane.doe@example.com</div>
<div class="a mono" style="left:1355.08px;top:855px;font-size:26.4px;line-height:26.4px;color:#e0e0e0;transform:scaleX(0.9247);transform-origin:0 0;-webkit-text-stroke:0.3px #e0e0e0;">555-234-5678</div>
<svg style="left:0;top:0" width="1995" height="1190" viewBox="0 0 1995 1190"><path d="M1945.5 771.9h10.5" stroke="#4aa8f8" stroke-width="3"/><path d="M1952.3 767.3l4.8 4.6-4.8 4.6" fill="none" stroke="#4aa8f8" stroke-width="3"/><path d="M1950.5 778.5V788H1967V774.8L1962 769.5H1958.5V788M1954.5 778.5V788" fill="none" stroke="#d4d4d4" stroke-width="2.2"/><path d="M1960 770l6.5 6.5h-6.5z" fill="#d4d4d4"/><path d="M1945.5 828h10.5" stroke="#4aa8f8" stroke-width="3"/><path d="M1952.3 823.4l4.8 4.6-4.8 4.6" fill="none" stroke="#4aa8f8" stroke-width="3"/><text x="1946.5" y="843" font-family="Liberation Mono" font-size="20" font-weight="700" fill="#d4d4d4" transform="translate(1946.5 843) scale(0.8 1) translate(-1946.5 -843)">{</text><text x="1962.5" y="843" font-family="Liberation Mono" font-size="22" font-weight="700" fill="#d4d4d4" transform="translate(1962.5 843) scale(0.8 1) translate(-1962.5 -843)">}</text><path d="M1945.5 884.1h10.5" stroke="#4aa8f8" stroke-width="3"/><path d="M1952.3 879.5l4.8 4.6-4.8 4.6" fill="none" stroke="#4aa8f8" stroke-width="3"/><path d="M1950.5 892.3V900.5H1956" fill="none" stroke="#d4d4d4" stroke-width="2.2"/><path d="M1958.5 883.2c4 0 7.5 2 8.5 5" fill="none" stroke="#d4d4d4" stroke-width="2.4"/><rect x="1959" y="891" width="12" height="10.8" fill="#d4d4d4"/><g fill="#1e1e1e"><rect x="1961" y="893" width="2.2" height="2.6"/><rect x="1964.9" y="893" width="2.2" height="2.6"/><rect x="1968.6" y="893" width="1.6" height="2.6"/><rect x="1961" y="897.3" width="2.2" height="2.6"/><rect x="1964.9" y="897.3" width="2.2" height="2.6"/><rect x="1968.6" y="897.3" width="1.6" height="2.6"/></g></svg>
<svg style="left:19px;top:1159px;" width="24" height="21.5" viewBox="0 0 24 21.5"><rect x="1.2" y="1.2" width="21.6" height="14.3" rx="1" fill="none" stroke="#fff" stroke-width="2.4"/><path d="M7.5 20.2h9M12 15.5v4.7" stroke="#fff" stroke-width="2.4"/><path d="M8.3 7.8 11.2 10.1 8.3 12.4M15.8 3.4 12.9 5.7 15.8 8" fill="none" stroke="#fff" stroke-width="1.9"/></svg>
<svg style="left:77.5px;top:1159.4px;" width="21" height="21" viewBox="0 0 21 21"><circle cx="10.5" cy="10.5" r="10.5" fill="#fff"/><path d="M6.5 6.5l8 8M14.5 6.5l-8 8" stroke="#68217a" stroke-width="2"/></svg>
<div class="a" style="left:107.00px;top:1160px;font-size:22.2px;line-height:22.2px;color:#ffffff;">0</div>
<svg style="left:126px;top:1159px;" width="22.5" height="20" viewBox="0 0 22.5 20"><path d="M11.25 0 22.5 20H0z" fill="#fff"/><path d="M11.25 6.5v6.5M11.25 14.8v2.3" stroke="#68217a" stroke-width="2.2"/></svg>
<div class="a" style="left:155.80px;top:1160px;font-size:22.2px;line-height:22.2px;color:#ffffff;">0</div>
<svg style="left:195.9px;top:1159.5px;" width="24.5" height="19.5" viewBox="0 0 24.5 19.5"><path d="M14 0l10.5 8.5L14 17v-5C7.5 12 3 14 0 19.5 1 11 6 5.5 14 5z" fill="#fff"/></svg>
<div class="a" style="left:226.79px;top:1160px;font-size:22.2px;line-height:22.2px;color:#ffffff;transform:scaleX(0.9137);transform-origin:0 0;">Live Share</div>
<div class="a" style="left:455.99px;top:1160px;font-size:22.2px;line-height:22.2px;color:#ffffff;transform:scaleX(0.9062);transform-origin:0 0;">Spaces: 4</div>
<div class="a" style="left:573.49px;top:1160px;font-size:22.2px;line-height:22.2px;color:#ffffff;transform:scaleX(0.9119);transform-origin:0 0;">UTF-8</div>
<div class="a" style="left:658.97px;top:1160px;font-size:22.2px;line-height:22.2px;color:#ffffff;transform:scaleX(0.8318);transform-origin:0 0;">CRLF</div>
<div class="a" style="left:767.24px;top:1160px;font-size:22.2px;line-height:22.2px;color:#ffffff;transform:scaleX(0.8570);transform-origin:0 0;">SQL</div>
<div class="a" style="left:860.97px;top:1160px;font-size:22.2px;line-height:22.2px;color:#ffffff;transform:scaleX(0.9344);transform-origin:0 0;">Go Live</div>
<div class="a" style="left:960.41px;top:1160px;font-size:22.2px;line-height:22.2px;color:#ffffff;transform:scaleX(0.8934);transform-origin:0 0;">MSSQL</div>
<div class="a" style="left:1057.88px;top:1160px;font-size:22.2px;line-height:22.2px;color:#ffffff;transform:scaleX(0.9180);transform-origin:0 0;">SQLCMD: Off</div>
<div class="a" style="left:1212.22px;top:1160px;font-size:22.2px;line-height:22.2px;color:#ffffff;transform:scaleX(0.9762);transform-origin:0 0;">2 rows affected</div>
<div class="a" style="left:1387.30px;top:1160px;font-size:22.2px;line-height:22.2px;color:#ffffff;transform:scaleX(0.9101);transform-origin:0 0;">00:00:00.043</div>
<div class="a" style="left:1588.88px;top:1160px;font-size:22.2px;line-height:22.2px;color:#ffffff;transform:scaleX(0.9182);transform-origin:0 0;">127.0.0.1,50986 : AddressBook : sa</div>
<div class="a" style="left:734.00px;top:1159px;font-size:20px;line-height:20px;color:#ffffff;transform:scaleX(1.0917);transform-origin:0 0;">{ }</div>
<svg style="left:831.8px;top:1161.5px;" width="22.5" height="14" viewBox="0 0 22.5 14"><circle cx="11.25" cy="7" r="2.6" fill="#fff"/><g fill="none" stroke="#fff" stroke-width="2"><path d="M6.8 2.5a6.5 6.5 0 0 0 0 9M15.7 2.5a6.5 6.5 0 0 1 0 9M3.5 .5a10 10 0 0 0 0 13M19 .5a10 10 0 0 1 0 13"/></g></svg>
<svg style="left:1534px;top:1159.9px;" width="26.698700000000002" height="22.7072" viewBox="0 0 30.1 25.6"><path fill="#ffffff" d="M0 16.4C0 11.4 2.2 10.4 6.2 10.4H23.9C27.9 10.4 30.1 11.4 30.1 16.4V19.4C30.1 23.4 22.2 25.6 15.05 25.6S0 23.4 0 19.4z"/><rect x="6.2" y="13" width="17.9" height="9.1" rx="2.2" fill="#68217a"/><rect x="10.5" y="14.9" width="2.5" height="4.9" rx="1.25" fill="#ffffff"/><rect x="17" y="14.9" width="2.8" height="4.9" rx="1.3" fill="#ffffff"/><ellipse cx="8.95" cy="6.4" rx="4.45" ry="4.8" fill="#68217a" stroke="#ffffff" stroke-width="3.2"/><ellipse cx="21.05" cy="6.4" rx="4.45" ry="4.8" fill="#68217a" stroke="#ffffff" stroke-width="3.2"/></svg>
<svg style="left:1946.1px;top:1159px;" width="18.4" height="21" viewBox="0 0 18.4 21"><path d="M9.2 0c.9 0 1.6.7 1.6 1.6v.5c3.2.7 5.2 3.4 5.2 6.9v4.5l2.4 3.2v1.3H0v-1.3l2.4-3.2V9c0-3.5 2-6.2 5.2-6.9v-.5C7.6.7 8.3 0 9.2 0zM6.5 18.8h5.4c0 1.3-1.2 2.2-2.7 2.2s-2.7-.9-2.7-2.2z" fill="#fff"/></svg>
<div id="frame"></div></div></body></html>
